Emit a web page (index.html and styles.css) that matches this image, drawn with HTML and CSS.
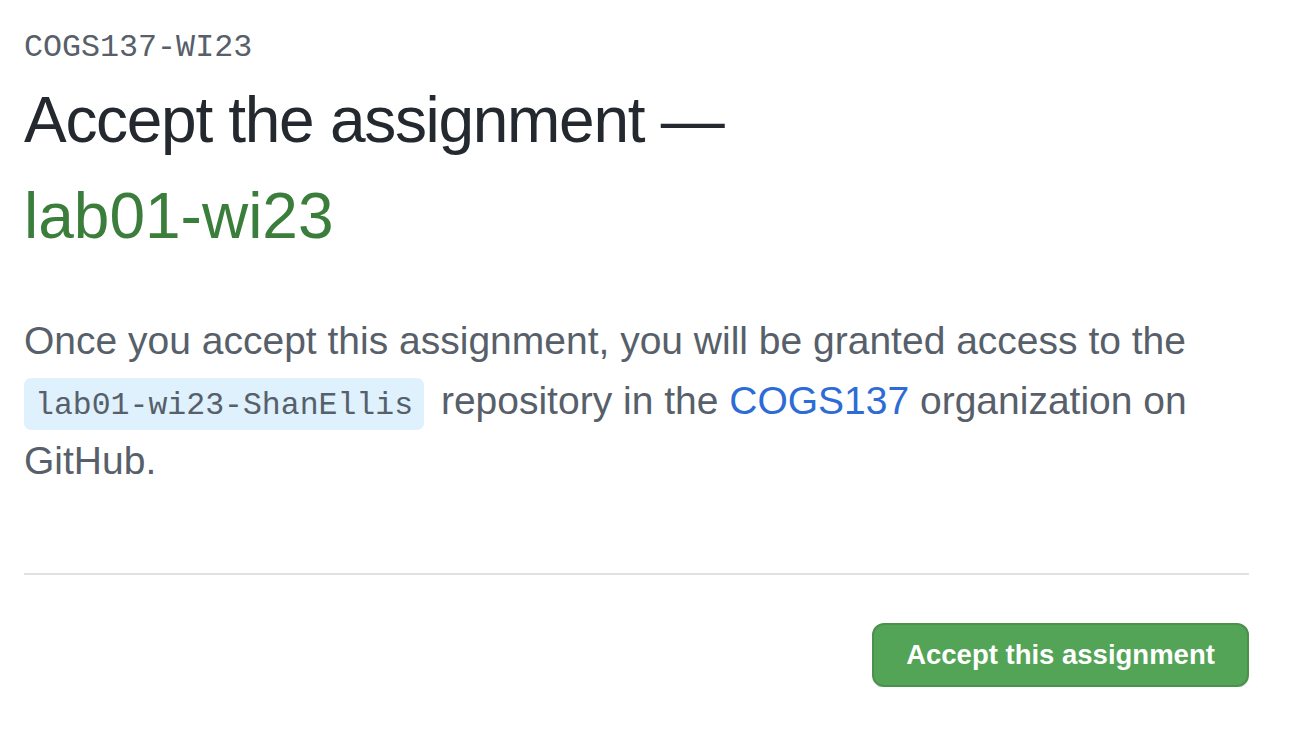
FILE: index.html
```html
<!DOCTYPE html>
<html lang="en">
<head>
<meta charset="utf-8">
<title>Accept the assignment</title>
<link rel="stylesheet" href="styles.css">
</head>
<body>
<main class="page">
  <div class="course">COGS137-WI23</div>
  <h1 class="title"><span class="title-lead">Accept the assignment —</span><br><span class="title-name">lab01-wi23</span></h1>
  <p class="intro">Once you accept this assignment, you will be granted access to the <code class="repo">lab01-wi23-ShanEllis</code> repository in the <a class="org" href="#">COGS137</a> organization on GitHub.</p>
  <hr class="divider">
  <div class="actions">
    <button class="accept" type="button">Accept this assignment</button>
  </div>
</main>
</body>
</html>
```
FILE: styles.css
```css
html, body {
  margin: 0;
  padding: 0;
  background: #ffffff;
}

.page {
  padding: 24px 41px 0 24px;
  font-family: "Liberation Sans", Arial, sans-serif;
}

.course {
  font-family: "Liberation Mono", "DejaVu Sans Mono", monospace;
  font-size: 31.7px;
  line-height: 48px;
  color: #57606a;
}

.title {
  margin: 0;
  font-weight: 400;
  font-size: 64px;
  line-height: 96px;
  color: #24292f;
}

.title-lead {
  letter-spacing: -1.3px;
}

.title-name {
  color: #3b7e3c;
}

.intro {
  margin: 47px 0 0;
  font-size: 39px;
  line-height: 60px;
  color: #57606a;
}

.repo {
  font-family: "Liberation Mono", "DejaVu Sans Mono", monospace;
  font-size: 31.5px;
  line-height: 1;
  background: #def1fd;
  border-radius: 7px;
  padding: 10px 11px 7px;
  margin-right: 6px;
  color: #57606a;
}

.org {
  color: #2d6bd6;
  text-decoration: none;
}

.divider {
  margin: 82px 0 0;
  border: 0;
  height: 2px;
  background: #e1e1e1;
}

.actions {
  display: flex;
  justify-content: flex-end;
  margin-top: 48px;
}

.accept {
  box-sizing: border-box;
  width: 377px;
  height: 64px;
  border: 2px solid #4a914d;
  border-radius: 12px;
  background: #54a457;
  color: #ffffff;
  font-family: "Liberation Sans", Arial, sans-serif;
  font-weight: 700;
  font-size: 27.5px;
  padding: 0;
  box-shadow: 0 1px 0 rgba(27, 31, 36, 0.1);
}
```
